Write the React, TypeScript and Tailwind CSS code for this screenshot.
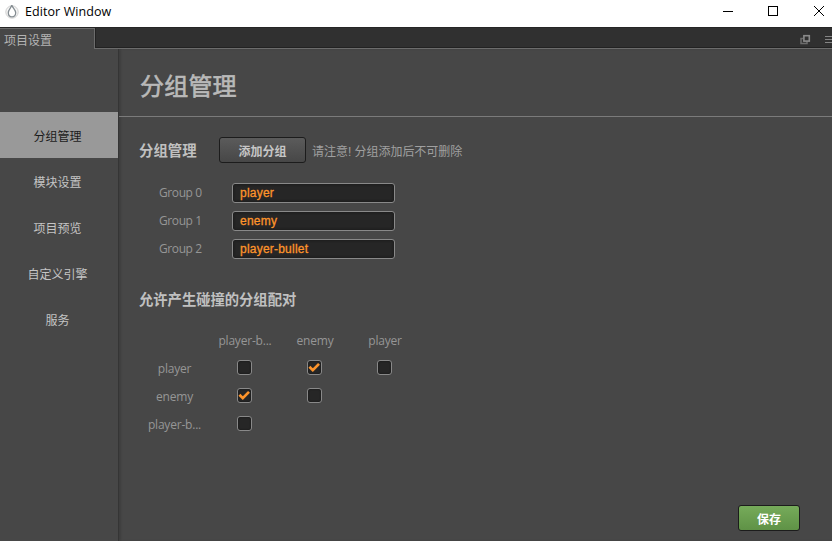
import type { ReactNode } from "react";

const groups = ["player", "enemy", "player-bullet"];
const menu = ["分组管理", "模块设置", "项目预览", "自定义引擎", "服务"];
const columns = ["player-b...", "enemy", "player"];
const matrix = [
  { name: "player", cells: [false, true, false] },
  { name: "enemy", cells: [true, false] },
  { name: "player-b...", cells: [false] },
];

function Flame() {
  return (
    <svg width="14" height="15" viewBox="0 0 14 15" fill="none">
      <circle cx="7" cy="8" r="6.2" fill="#f6f6f6" stroke="#d0d0d0" strokeWidth="1" />
      <path d="M6.800 1.200C6.400 3.500 3.300 5.600 3.300 8.800c0 2.500 1.600 4.100 3.700 4.100s3.700-1.600 3.700-4.100C10.700 5.800 7.700 4 6.800 1.200z" fill="#fff" stroke="#858d92" strokeWidth="1.300" />
    </svg>
  );
}

function TitleBar() {
  return (
    <header className="flex h-[27px] shrink-0 bg-white text-black">
      <div className="flex flex-1 pl-[5px]">
        <div className="pt-[4px]"><Flame /></div>
        <span className="ml-[6px] mt-[3px] text-[12.5px] leading-[18px] tracking-[0.08px] font-['Open_Sans','Noto_Sans',sans-serif]">Editor Window</span>
      </div>
      <svg width="110" height="27" viewBox="0 0 110 27" fill="none" stroke="#000" shapeRendering="crispEdges">
        <path d="M1 11.500h10" />
        <rect x="46.500" y="6.500" width="9" height="9" />
        <path d="M92 6l10 10M102 6l-10 10" shapeRendering="auto" />
      </svg>
    </header>
  );
}

function TabBar() {
  return (
    <div className="flex h-[22px] shrink-0 border-t border-t-[#262626]">
      <div className="h-[21px] w-[95px] border-r border-t border-[#6c6c6c] bg-[#474747] pl-[4px] text-[12px] leading-[24px] text-[#b4b4b4]">
        项目设置
      </div>
      <div className="flex flex-1 flex-col border-b border-[#6c6c6c] bg-[#303030]">
        <div className="flex flex-1 justify-end border-b border-l border-[#222]">
          <svg width="32" height="19" viewBox="0 0 32 19" fill="none">
            <path d="M3 10.500H1v5h6v-2" stroke="#6c6c6c" strokeWidth="1.500" />
            <rect x="3.900" y="7.700" width="5.400" height="5.400" stroke="#8a8a8a" strokeWidth="1.600" />
            <path d="M25 8.500h7M25 11.500h7M25 14.500h7" stroke="#858585" />
          </svg>
        </div>
      </div>
    </div>
  );
}

function Sidebar() {
  return (
    <nav className="w-[118px] shrink-0 pt-[63px] text-[12px] text-[#c4c4c4]">
      {menu.map((item, i) => (
        <div
          key={item}
          className={`flex h-[46px] items-center justify-center pr-[3px] pt-[4px] ${i === 0 ? "bg-[#999] text-[#1c1c1c]" : ""}`}
        >
          {item}
        </div>
      ))}
    </nav>
  );
}

function Check({ on }: { on: boolean }) {
  return (
    <span className="flex size-[15px] items-center justify-center rounded-[3px] border border-[#898989] bg-[#262626] shadow-[inset_0_0_2px_#111]">
      {on && (
        <svg width="13" height="13" viewBox="0 0 13 13" fill="none">
          <path d="M1.400 5.700l3.400 3.400L11 2.900" stroke="#fd942b" strokeWidth="2.700" />
        </svg>
      )}
    </span>
  );
}

function Cell({ children }: { children: ReactNode }) {
  return <div className="flex w-[70px] justify-center">{children}</div>;
}

export default function App() {
  return (
    <div className="flex h-[541px] w-[832px] flex-col overflow-hidden bg-[#474747] font-['Liberation_Sans','Noto_Sans_CJK_SC',sans-serif]">
      <TitleBar />
      <TabBar />
      <div className="flex min-h-0 flex-1">
        <Sidebar />
        <main className="flex flex-1 flex-col border-l border-[#353535] shadow-[inset_2px_0_2px_#3f3f3f]">
          <h1 className="h-[68px] shrink-0 border-b border-[#7b7b7b] pl-[21px] pt-[20px] text-[24px] font-normal leading-[36px] tracking-[0.2px] text-[#b9b9b9] [-webkit-text-stroke:0.6px_#b9b9b9]">
            分组管理
          </h1>
          <section className="flex flex-1 flex-col pl-[20px]">
            <div className="mt-[20px] flex h-[26px] items-center">
              <h2 className="w-[80px] pt-[2px] text-[14.400px] font-bold leading-[26px] text-[#c0c0c0]">分组管理</h2>
              <button className="h-[26px] w-[87px] rounded-[3px] border border-[#1c1c1c] bg-linear-to-b from-[#5b5b5b] to-[#474747] pt-[2px] text-[12px] font-bold leading-[24px] text-[#c6c6c6]">
                添加分组
              </button>
              <span className="ml-[6px] pt-[4px] text-[12px] tracking-[-0.03px] text-[#a0a0a0]">请注意! 分组添加后不可删除</span>
            </div>
            <div className="mt-[20px] flex flex-col gap-[8px]">
              {groups.map((name, i) => (
                <div key={name} className="flex h-[20px] items-center">
                  <label className="w-[93px] pl-[20px] text-[12px] leading-[20px] tracking-[-0.4px] text-[#969696] font-['Open_Sans','Noto_Sans',sans-serif]">
                    Group {i}
                  </label>
                  <div className="h-[20px] w-[163px] rounded-[3px] border border-[#898989] bg-[#262626] pl-[7px] text-[12px] leading-[19px] tracking-[0.22px] text-[#fd942b] shadow-[inset_0_0_3px_#151515] [-webkit-text-stroke:0.3px_#fd942b]">
                    {name}
                  </div>
                </div>
              ))}
            </div>
            <h2 className="mt-[29px] h-[24px] text-[14.300px] font-bold leading-[24px] text-[#c0c0c0]">允许产生碰撞的分组配对</h2>
            <div className="mt-[15px] text-[12px] leading-[28px] tracking-[-0.2px] text-[#969696] font-['Open_Sans','Noto_Sans',sans-serif]">
              <div className="flex h-[28px] pl-[71px]">
                {columns.map((c) => <Cell key={c}>{c}</Cell>)}
              </div>
              {matrix.map((row) => (
                <div key={row.name} className="flex h-[28px]">
                  <div className="w-[70px] pl-[1px] text-center">{row.name}</div>
                  {row.cells.map((on, i) => (
                    <Cell key={i}><div className="pt-[5px]"><Check on={on} /></div></Cell>
                  ))}
                </div>
              ))}
            </div>
          </section>
          <footer className="flex h-[37px] shrink-0 justify-end pr-[32px] pt-px">
            <button className="h-[26px] w-[62px] rounded-[3px] border border-[#1c1c1c] bg-linear-to-b from-[#76ab5a] to-[#5f9246] pt-[2px] text-[12px] font-bold leading-[25px] text-white">
              保存
            </button>
          </footer>
        </main>
      </div>
    </div>
  );
}
